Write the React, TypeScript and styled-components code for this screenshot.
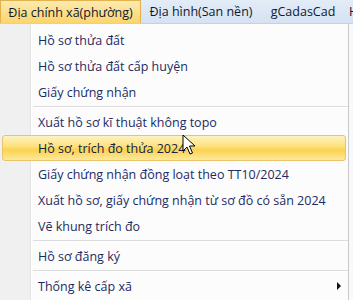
import React from "react";
import styled, { createGlobalStyle } from "styled-components";

const Global = createGlobalStyle`
  html, body { margin: 0; padding: 0; background: #ffffff; }
  body { font-family: "Open Sans", "Noto Sans", sans-serif; }
`;

const Page = styled.div`
  width: 353px;
  height: 300px;
  overflow: hidden;
  position: relative;
  background: #f7f9fc;
`;

const MenuBar = styled.div`
  height: 23px;
  display: flex;
  align-items: stretch;
  background: linear-gradient(#e3ecf7, #d6e2f2);
  border-bottom: 1px solid #c5d2e3;
  overflow: hidden;
`;

const BarItem = styled.div<{ $active?: boolean; $w: number }>`
  width: ${(p) => p.$w}px;
  flex: none;
  display: flex;
  align-items: center;
  justify-content: center;
  font-size: 12.5px;
  color: #10182e;
  box-sizing: border-box;
  white-space: nowrap;
  ${(p) =>
    p.$active
      ? `background: linear-gradient(#fdeab0, #fbd56c);
         border: 1px solid #e2b34c;
         border-bottom: none;`
      : ""}
`;

const BarTail = styled.div`
  flex: none;
  display: flex;
  align-items: center;
  padding-left: 4px;
  font-size: 12.5px;
  color: #10182e;
  white-space: nowrap;
`;

const Dropdown = styled.div`
  width: 349px;
  display: flex;
  flex-direction: column;
  background: linear-gradient(90deg, #f0f0f0 0, #f0f0f0 30px, #e2e3e3 30px, #e2e3e3 31px, #ffffff 31px, #ffffff 32px, #fcfcfc 32px);
  border-right: 1px solid #c8c8c8;
  padding-top: 3px;
  box-sizing: border-box;
  height: 277px;
`;

const Item = styled.div<{ $hl?: boolean }>`
  height: 26px;
  flex: none;
  display: flex;
  align-items: center;
  padding-left: 35px;
  padding-right: 8px;
  margin: 0 2px;
  font-size: 12.5px;
  color: #1e2b63;
  white-space: nowrap;
  box-sizing: border-box;
  position: relative;
  border-radius: 3px;
  ${(p) =>
    p.$hl
      ? `background: linear-gradient(#fdf3c2 0%, #fde27e 42%, #fbd250 58%, #fde99c 100%);
         border: 1px solid #e8c36a;
         color: #1a2040;`
      : "border: 1px solid transparent;"}
`;

const Separator = styled.div`
  height: 4px;
  flex: none;
  display: flex;
  align-items: center;
  padding-left: 33px;
  &::after {
    content: "";
    display: block;
    flex: 1;
    height: 1px;
    background: #dcdcdc;
    border-bottom: 1px solid #ffffff;
  }
`;

const Arrow = styled.span`
  position: absolute;
  right: 4px;
  top: 50%;
  transform: translateY(-50%);
  width: 0;
  height: 0;
  border-top: 4px solid transparent;
  border-bottom: 4px solid transparent;
  border-left: 4px solid #111;
`;

const Cursor = styled.svg`
  position: absolute;
  left: 182px;
  top: 134px;
`;

export default function App() {
  return (
    <Page>
      <Global />
      <MenuBar>
        <BarItem $active $w={141}>Địa chính xã(phường)</BarItem>
        <BarItem $w={120}>Địa hình(San nền)</BarItem>
        <BarItem $w={84}>gCadasCad</BarItem>
        <BarTail>H</BarTail>
      </MenuBar>
      <Dropdown>
        <Item>Hồ sơ thửa đất</Item>
        <Item>Hồ sơ thửa đất cấp huyện</Item>
        <Item>Giấy chứng nhận</Item>
        <Separator />
        <Item>Xuất hồ sơ kĩ thuật không topo</Item>
        <Item $hl>Hồ sơ, trích đo thửa 2024</Item>
        <Item>Giấy chứng nhận đồng loạt theo TT10/2024</Item>
        <Item>Xuất hồ sơ, giấy chứng nhận từ sơ đồ có sẵn 2024</Item>
        <Item>Vẽ khung trích đo</Item>
        <Separator />
        <Item>Hồ sơ đăng ký</Item>
        <Separator />
        <Item>
          Thống kê cấp xã
          <Arrow />
        </Item>
      </Dropdown>
      <Cursor width="14" height="22" viewBox="0 0 14 22">
        <path d="M1 1 L1 17 L5 13 L8 20 L10.5 19 L7.5 12 L13 12 Z" fill="#ffffff" stroke="#000" strokeWidth="1" strokeLinejoin="round" />
      </Cursor>
    </Page>
  );
}
